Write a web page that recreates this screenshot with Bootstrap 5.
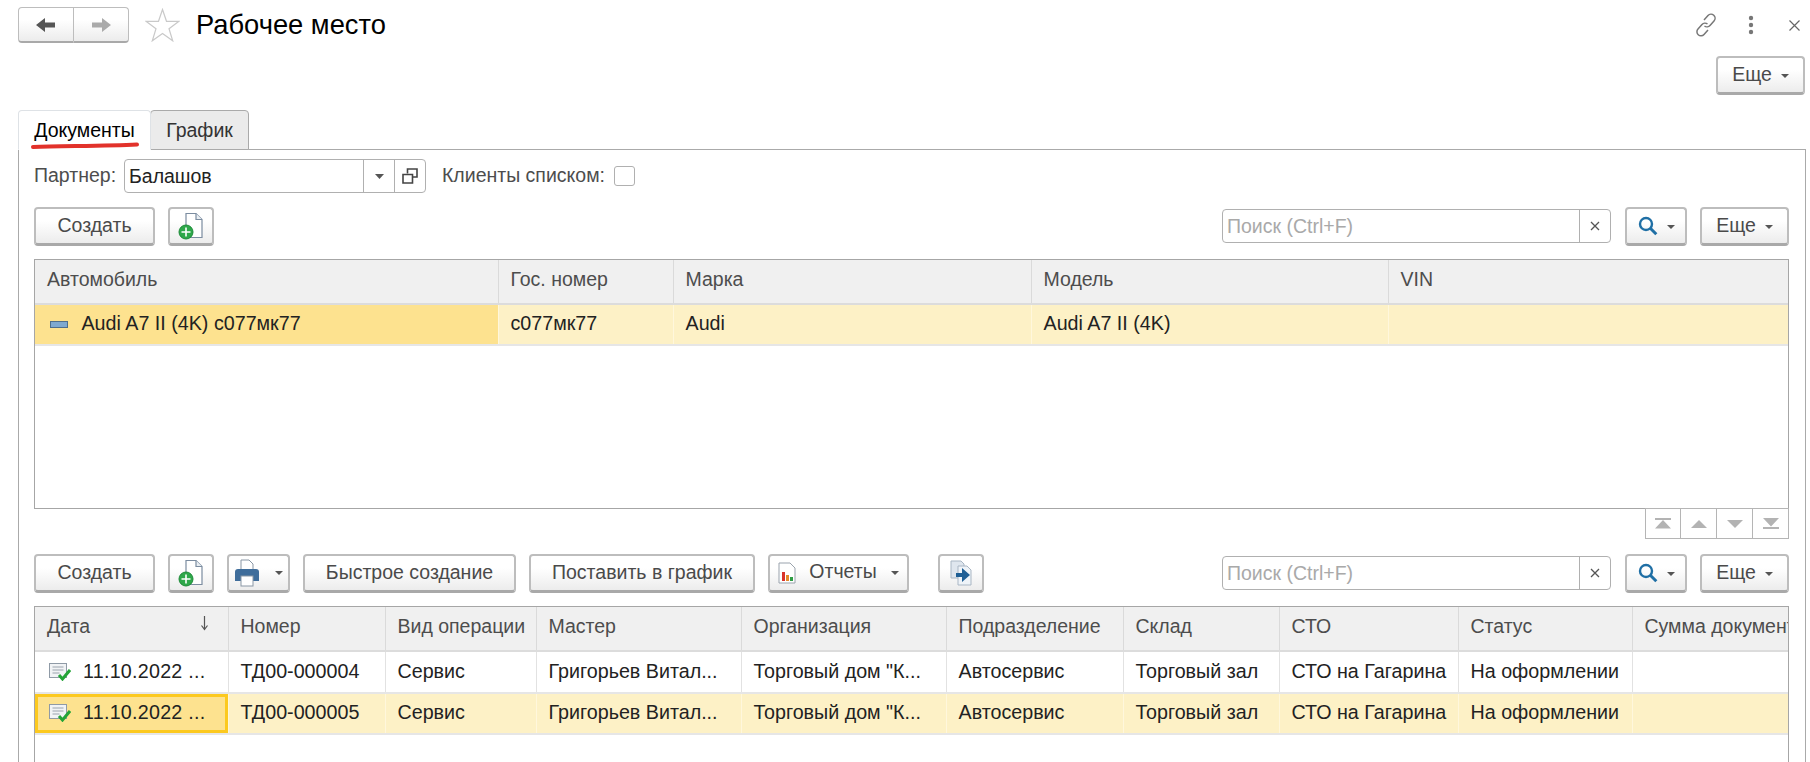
<!DOCTYPE html>
<html lang="ru">
<head>
  <meta charset="UTF-8">
  <title>Рабочее место</title>
  <meta name="viewport" content="width=device-width, initial-scale=1" />
  <link href="https://cdn.jsdelivr.net/npm/bootstrap@5.3.0/dist/css/bootstrap.min.css" rel="stylesheet">
  <style>
    html, body {
      height: 762px;
      overflow: hidden;
    }

    body {
      margin: 0;
      background-color: #fff;
      color: #222;
      font-family: "Liberation Sans", Arial, sans-serif;
      font-size: 19.5px;
    }

    /* Title row */
    .head-row {
      height: 36px;
      margin-top: 7px;
      padding: 0 4px 0 18px;
    }

    .hist-group {
      width: 111px;
      height: 36px;
    }

    .hist-group .tool-btn {
      flex: 1 1 0;
      padding: 0;
      border-width: 1px 1px 2px;
    }

    .hist-group .tool-btn:first-child {
      border-radius: 4px 0 0 4px;
    }

    .hist-group .tool-btn:last-child {
      border-radius: 0 4px 4px 0;
      border-left: 0;
    }

    .star-ico {
      margin-left: 16px;
      margin-right: 16px;
    }

    .page-title {
      font-size: 27.3px;
      line-height: 36px;
      color: #000;
      margin: 0;
      font-weight: 400;
    }

    .head-icons {
      gap: 29px;
      padding-right: 5px;
    }

    .more-row {
      margin-top: 13px;
      padding-right: 5px;
    }

    /* Buttons */
    .tool-btn {
      height: 39px;
      padding: 0;
      font-size: 19.5px;
      line-height: 1;
      color: #4a4a4a;
      background: linear-gradient(#fff 35%, #ececec);
      border: 2px solid #bdbdbd;
      border-bottom: 3px solid #a9a9a9;
      border-radius: 4px;
      white-space: nowrap;
    }

    .tool-btn.dropdown-toggle::after {
      margin-left: 9px;
      border-top: 4px solid #555;
      border-right: 4px solid transparent;
      border-left: 4px solid transparent;
      border-bottom: 0;
      vertical-align: 3px;
    }

    .w-create { width: 121px; }
    .w-icon { width: 46px; }
    .w-print { width: 63px; }
    .w-quick { width: 213px; }
    .w-sched { width: 226px; }
    .w-report { width: 141px; }
    .w-find { width: 62px; }
    .w-more { width: 89px; }

    /* Tabs */
    .tab-strip {
      margin: 15px 0 0 18px;
      border: 0;
      height: 39px;
    }

    .tab-strip .nav-link {
      height: 40px;
      padding: 0;
      font-size: 19.5px;
      line-height: 38px;
      text-align: center;
      color: #333;
      border: 1px solid #aaa;
      border-radius: 4px 4px 0 0;
      margin: 0;
    }

    .tab-strip .nav-link.active {
      width: 133px;
      background: #fff;
      border-bottom-color: #fff;
      position: relative;
      z-index: 2;
    }

    .tab-strip .nav-link.off-tab {
      width: 99px;
      margin-left: -1px;
      background: #ebebeb;
      border-bottom-color: #aaa;
    }

    .red-stroke {
      position: absolute;
      left: 12px;
      top: 31px;
    }

    .tab-panel {
      margin: 0 4px 0 18px;
      padding: 9px 16px 0 15px;
      height: 620px;
      border: 1px solid #aaa;
      border-bottom: 0;
    }

    /* Partner filter */
    .filter-row {
      height: 34px;
    }

    .filter-label {
      color: #4d4d4d;
      width: 90px;
    }

    .pick-box {
      width: 302px;
      height: 34px;
      border: 1px solid #b0b0b0;
      border-radius: 4px;
    }

    .pick-text {
      padding-left: 4px;
      line-height: 32px;
      color: #222;
    }

    .pick-cell {
      width: 31px;
      border-left: 1px solid #b0b0b0;
    }

    .client-label {
      margin-left: 16px;
      color: #4d4d4d;
      width: 172px;
    }

    .check-box {
      width: 21px;
      height: 20px;
      border: 1px solid #b0b0b0;
      border-radius: 3px;
    }

    /* Toolbars */
    .tool-row {
      height: 39px;
      margin-top: 14px;
      gap: 13px;
    }

    .find-box {
      width: 389px;
      height: 34px;
      margin: 2px 1px 0 0;
      border: 1px solid #b0b0b0;
      border-radius: 4px;
    }

    .find-text {
      padding-left: 4px;
      line-height: 32px;
      color: #a9a9a9;
    }

    .find-clear {
      width: 31px;
      border-left: 1px solid #b0b0b0;
    }

    /* Grids */
    .grid-box {
      margin-top: 13px;
      border: 1px solid #a6a6a6;
      overflow: hidden;
    }

    .grid-top { height: 250px; }
    .grid-bottom { height: 170px; }

    .grid-box .table {
      table-layout: fixed;
      width: 100%;
      margin: 0;
      font-size: 19.7px;
    }

    .grid-box .table > * > tr > * {
      padding: 0 0 1px 12px;
      white-space: nowrap;
      overflow: hidden;
      font-weight: 400;
      vertical-align: middle;
      color: #222;
      background: #fff;
      border: 0;
      border-right: 1px solid #e2e2e2;
      box-shadow: none;
    }

    .grid-box .table > * > tr > *:last-child {
      border-right: 0;
    }

    .grid-box .table > thead > tr > th {
      height: 44px;
      padding-bottom: 3px;
      font-size: 19.5px;
      color: #4d4d4d;
      background: #f0f0f0;
      border-right-color: #dadada;
      border-bottom: 2px solid #dcdcdc;
    }

    .grid-box .table > tbody > tr > td {
      border-bottom: 2px solid #e6e6e6;
    }

    .grid-top .table > tbody > tr > td { height: 41px; }
    .grid-bottom .table > tbody > tr > td { height: 42px; }
    .grid-bottom .table > tbody > tr:last-child > td { height: 41px; }

    .grid-box .table > tbody > tr.picked > td {
      background: #fdf1c6;
      border-right-color: #fff7dc;
    }

    .grid-box .table > tbody > tr.picked > td.here {
      background: #fde28f;
      border-right-color: #fff7dc;
    }

    .grid-bottom .table > tbody > tr.picked > td.here {
      box-shadow: inset 0 0 0 3px #fcc91f;
    }

    .bar-ico {
      margin: 0 4px 0 3px;
      vertical-align: 2px;
    }

    .doc-ico {
      margin: 0 12px 0 2px;
      vertical-align: -3px;
    }

    .date-text {
      letter-spacing: .25px;
    }

    .sort-mark {
      float: right;
      margin-top: 3px;
      margin-right: 19px;
    }

    .top-cols col:nth-child(1) { width: 463px; }
    .top-cols col:nth-child(2) { width: 175px; }
    .top-cols col:nth-child(3) { width: 358px; }
    .top-cols col:nth-child(4) { width: 357px; }

    .low-cols col:nth-child(1) { width: 193px; }
    .low-cols col:nth-child(2) { width: 157px; }
    .low-cols col:nth-child(3) { width: 151px; }
    .low-cols col:nth-child(4) { width: 205px; }
    .low-cols col:nth-child(5) { width: 205px; }
    .low-cols col:nth-child(6) { width: 177px; }
    .low-cols col:nth-child(7) { width: 156px; }
    .low-cols col:nth-child(8) { width: 179px; }
    .low-cols col:nth-child(9) { width: 174px; }

    /* Pager */
    .pager-row {
      height: 31px;
      margin-top: -1px;
    }

    .pager-cell {
      width: 36px;
      border: 1px solid #b5b5b5;
      border-left: 0;
    }

    .pager-cell:first-child {
      border-left: 1px solid #b5b5b5;
    }

    .pager-row + .tool-row {
      margin-top: 15px;
    }
  </style>
</head>
<body>

<!-- Shared icons -->
<svg width="0" height="0" class="d-block">
  <defs>
    <symbol id="ico-add" viewBox="0 0 26 28">
      <path d="M8 1.500h10l6 6v18H8z" fill="#fff" stroke="#7b8ca0" stroke-width="1.200"/>
      <path d="M18 1.500v6h6" fill="#e9eef3" stroke="#7b8ca0" stroke-width="1.200"/>
      <circle cx="8" cy="20" r="7" fill="#2ea84a" stroke="#1d8a38"/>
      <path d="M8 15.500v9M3.500 20h9" stroke="#fff" stroke-width="1.600"/>
    </symbol>
    <symbol id="ico-find" viewBox="0 0 20 20">
      <circle cx="8" cy="8" r="6" fill="none" stroke="#1f6fa5" stroke-width="2.400"/>
      <path d="M12.300 12.300l6 6" stroke="#1f6fa5" stroke-width="3"/>
    </symbol>
    <symbol id="ico-doc-ok" viewBox="0 0 22 18">
      <rect x="0.500" y="0.500" width="17" height="14" fill="#f1f3f5" stroke="#8f9aa6"/>
      <path d="M3.500 4h11M3.500 7h11M3.500 10h7" stroke="#9aa3ad"/>
      <path d="M10 12l3.500 4L21 7" fill="none" stroke="#23a437" stroke-width="3"/>
    </symbol>
  </defs>
</svg>

<div class="head-row d-flex align-items-center">
  <div class="hist-group d-flex">
    <button class="btn tool-btn h-100" type="button" aria-label="Назад">
      <svg width="24" height="18" viewBox="0 0 24 18"><path d="M2 9l9-7v4.500h10v5H11V16z" fill="#555"/></svg>
    </button>
    <button class="btn tool-btn h-100" type="button" aria-label="Вперед">
      <svg width="24" height="18" viewBox="0 0 24 18"><path d="M22 9l-9-7v4.500H3v5h10V16z" fill="#aaa"/></svg>
    </button>
  </div>
  <svg class="star-ico" width="35" height="34" viewBox="0 0 35 34"><path d="M17.500 1.500l4 11.800h12.500l-10 7.500 3.700 12-10.200-7.300-10.200 7.300 3.700-12-10-7.500h12.500z" fill="#fff" stroke="#c9c9c9" stroke-width="1.200"/></svg>
  <h1 class="page-title">Рабочее место</h1>
  <div class="head-icons d-flex align-items-center ms-auto">
    <svg width="24" height="26" viewBox="0 0 24 26" fill="none" stroke="#777" stroke-width="1.500"><path d="M10 8l4-4.500a4 4 0 0 1 6 5.500l-4 4.500a4 4 0 0 1-5.500.5"/><path d="M14 18l-4 4.500a4 4 0 0 1-6-5.500l4-4.500a4 4 0 0 1 5.500-.5"/></svg>
    <svg width="8" height="20" viewBox="0 0 8 20" fill="#777"><circle cx="4" cy="3" r="2.200"/><circle cx="4" cy="10" r="2.200"/><circle cx="4" cy="17" r="2.200"/></svg>
    <svg class="ms-1" width="13" height="13" viewBox="0 0 13 13" stroke="#666" stroke-width="1.200"><path d="M1.500 1.500l10 10M11.500 1.500l-10 10"/></svg>
  </div>
</div>

<div class="more-row d-flex justify-content-end">
  <button class="btn tool-btn w-more dropdown-toggle" type="button">Еще</button>
</div>

<ul class="nav nav-tabs tab-strip">
  <li class="nav-item">
    <a class="nav-link active" href="#">Документы
      <svg class="red-stroke" width="108" height="7" viewBox="0 0 108 7"><path d="M2 5C30 4 75 4 106 2.500" fill="none" stroke="#e2322b" stroke-width="4" stroke-linecap="round"/></svg>
    </a>
  </li>
  <li class="nav-item"><a class="nav-link off-tab" href="#">График</a></li>
</ul>

<div class="tab-panel">
  <div class="filter-row d-flex align-items-center">
    <span class="filter-label">Партнер:</span>
    <div class="pick-box d-flex">
      <span class="pick-text flex-grow-1">Балашов</span>
      <span class="pick-cell d-flex align-items-center justify-content-center">
        <svg width="9" height="5" viewBox="0 0 9 5"><path d="M0 0h9L4.500 5z" fill="#555"/></svg>
      </span>
      <span class="pick-cell d-flex align-items-center justify-content-center">
        <svg width="16" height="16" viewBox="0 0 16 16" fill="none" stroke="#444" stroke-width="1.600"><path d="M5.500 5.500V1h9.500v8h-4.500"/><path d="M1 6.500h9.500V15H1z"/></svg>
      </span>
    </div>
    <span class="client-label">Клиенты списком:</span>
    <span class="check-box"></span>
  </div>

  <div class="tool-row d-flex">
    <button class="btn tool-btn w-create" type="button">Создать</button>
    <button class="btn tool-btn w-icon" type="button" aria-label="Добавить"><svg width="26" height="28"><use href="#ico-add"/></svg></button>
    <div class="find-box d-flex ms-auto">
      <span class="find-text flex-grow-1">Поиск (Ctrl+F)</span>
      <span class="find-clear d-flex align-items-center justify-content-center">
        <svg width="10" height="10" viewBox="0 0 10 10" stroke="#555" stroke-width="1.300"><path d="M1 1l8 8M9 1l-8 8"/></svg>
      </span>
    </div>
    <button class="btn tool-btn w-find dropdown-toggle" type="button" aria-label="Найти"><svg width="20" height="20"><use href="#ico-find"/></svg></button>
    <button class="btn tool-btn w-more dropdown-toggle" type="button">Еще</button>
  </div>

  <div class="grid-box grid-top">
    <table class="table">
      <colgroup class="top-cols"><col><col><col><col><col></colgroup>
      <thead>
        <tr><th>Автомобиль</th><th>Гос. номер</th><th>Марка</th><th>Модель</th><th>VIN</th></tr>
      </thead>
      <tbody>
        <tr class="picked">
          <td class="here">
            <svg class="bar-ico" width="18" height="7" viewBox="0 0 18 7"><rect x="0.500" y="0.500" width="17" height="6" fill="#7fa9cf" stroke="#4f6f8c"/></svg>
            <span class="ms-1">Audi A7 II (4K) с077мк77</span>
          </td>
          <td>с077мк77</td>
          <td>Audi</td>
          <td>Audi A7 II (4K)</td>
          <td></td>
        </tr>
      </tbody>
    </table>
  </div>

  <div class="pager-row d-flex justify-content-end">
    <span class="pager-cell d-flex align-items-center justify-content-center">
      <svg width="16" height="11" viewBox="0 0 16 11" fill="#b3b3b3"><path d="M0 0h16v2H0zM8 2l8 8.500H0z"/></svg>
    </span>
    <span class="pager-cell d-flex align-items-center justify-content-center">
      <svg width="16" height="8" viewBox="0 0 16 8" fill="#b3b3b3"><path d="M8 0l8 8H0z"/></svg>
    </span>
    <span class="pager-cell d-flex align-items-center justify-content-center">
      <svg width="16" height="8" viewBox="0 0 16 8" fill="#b3b3b3"><path d="M0 0h16L8 8z"/></svg>
    </span>
    <span class="pager-cell d-flex align-items-center justify-content-center">
      <svg width="16" height="11" viewBox="0 0 16 11" fill="#b3b3b3"><path d="M0 0h16L8 8.500zM0 9h16v2H0z"/></svg>
    </span>
  </div>

  <div class="tool-row d-flex">
    <button class="btn tool-btn w-create" type="button">Создать</button>
    <button class="btn tool-btn w-icon" type="button" aria-label="Добавить"><svg width="26" height="28"><use href="#ico-add"/></svg></button>
    <button class="btn tool-btn w-print dropdown-toggle" type="button" aria-label="Печать">
      <svg width="26" height="28" viewBox="0 0 26 28"><path d="M7 1h8l4 4v9H7z" fill="#fff" stroke="#8a97a5"/><path d="M1 13q0-3 3-3h18q3 0 3 3v9H1z" fill="#3f6d9b"/><rect x="7" y="17" width="12" height="10" fill="#fff" stroke="#8a97a5"/></svg>
    </button>
    <button class="btn tool-btn w-quick" type="button">Быстрое создание</button>
    <button class="btn tool-btn w-sched" type="button">Поставить в график</button>
    <button class="btn tool-btn w-report dropdown-toggle" type="button">
      <svg class="me-2" width="18" height="22" viewBox="0 0 18 22"><path d="M1 1h11l5 5v15H1z" fill="#fff" stroke="#9aa3ad"/><path d="M4 10h3v9H4z" fill="#d9342b"/><path d="M8 13h3v6H8z" fill="#e58a2b"/><path d="M12 15h3v4h-3z" fill="#2f9e44"/></svg>
      Отчеты
    </button>
    <button class="btn tool-btn w-icon ms-3" type="button" aria-label="Перейти">
      <svg width="26" height="28" viewBox="0 0 26 28"><path d="M3 2h10l3 3v14H3z" fill="#dfe6ee" stroke="#a9b6c4"/><path d="M10 7h9l4 4v15H10z" fill="#eef3f8" stroke="#a9b6c4"/><path d="M8 14h6V9l8 7-8 7v-5H8z" fill="#1f5f95"/></svg>
    </button>
    <div class="find-box d-flex ms-auto">
      <span class="find-text flex-grow-1">Поиск (Ctrl+F)</span>
      <span class="find-clear d-flex align-items-center justify-content-center">
        <svg width="10" height="10" viewBox="0 0 10 10" stroke="#555" stroke-width="1.300"><path d="M1 1l8 8M9 1l-8 8"/></svg>
      </span>
    </div>
    <button class="btn tool-btn w-find dropdown-toggle" type="button" aria-label="Найти"><svg width="20" height="20"><use href="#ico-find"/></svg></button>
    <button class="btn tool-btn w-more dropdown-toggle" type="button">Еще</button>
  </div>

  <div class="grid-box grid-bottom">
    <table class="table">
      <colgroup class="low-cols"><col><col><col><col><col><col><col><col><col><col></colgroup>
      <thead>
        <tr>
          <th>Дата <svg class="sort-mark" width="9" height="16" viewBox="0 0 9 16" fill="none" stroke="#555" stroke-width="1.200"><path d="M4.500 1v13M1.500 10.500l3 4 3-4"/></svg></th>
          <th>Номер</th><th>Вид операции</th><th>Мастер</th><th>Организация</th>
          <th>Подразделение</th><th>Склад</th><th>СТО</th><th>Статус</th><th>Сумма документа</th>
        </tr>
      </thead>
      <tbody>
        <tr>
          <td><svg class="doc-ico" width="22" height="18"><use href="#ico-doc-ok"/></svg><span class="date-text">11.10.2022 ...</span></td>
          <td>ТД00-000004</td><td>Сервис</td><td>Григорьев Витал...</td><td>Торговый дом "К...</td>
          <td>Автосервис</td><td>Торговый зал</td><td>СТО на Гагарина</td><td>На оформлении</td><td></td>
        </tr>
        <tr class="picked">
          <td class="here"><svg class="doc-ico" width="22" height="18"><use href="#ico-doc-ok"/></svg><span class="date-text">11.10.2022 ...</span></td>
          <td>ТД00-000005</td><td>Сервис</td><td>Григорьев Витал...</td><td>Торговый дом "К...</td>
          <td>Автосервис</td><td>Торговый зал</td><td>СТО на Гагарина</td><td>На оформлении</td><td></td>
        </tr>
      </tbody>
    </table>
  </div>
</div>

<script src="https://cdn.jsdelivr.net/npm/bootstrap@5.3.0/dist/js/bootstrap.bundle.min.js"></script>
</body>
</html>
